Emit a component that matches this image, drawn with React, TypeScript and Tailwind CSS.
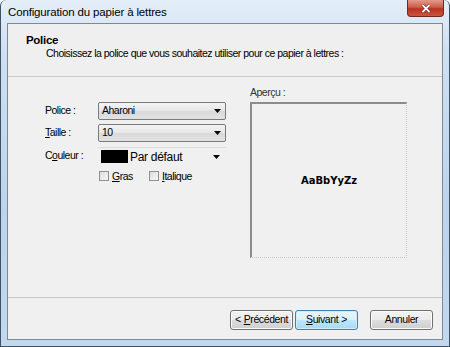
import React from "react";

const font = { fontFamily: '"Liberation Sans", Arial, sans-serif' };

function Arrow() {
  return (
    <svg width="7" height="4" viewBox="0 0 7 4" className="block">
      <path d="M0 0 H7 L3.5 4 Z" fill="#000" />
    </svg>
  );
}

function Select({ value }: { value: string }) {
  return (
    <div className="flex items-center justify-between h-[18px] w-[128px] rounded-[2px] border border-[#7a7a7a] bg-[linear-gradient(#f4f4f4,#e6e6e6_50%,#d9d9d9_51%,#e2e2e2)] pl-[3px] pr-[4px] text-[10.5px] tracking-[-0.5px] text-black">
      <span>{value}</span>
      <Arrow />
    </div>
  );
}

function Check({ children }: { children: React.ReactNode }) {
  return (
    <div className="flex items-center gap-[3px] w-[50px]">
      <div className="w-[10px] h-[10px] border border-[#8f8f8f] bg-[linear-gradient(135deg,#dcdcdc,#f7f7f7)]" />
      <span className="text-[10.5px] tracking-[-0.5px] leading-none">{children}</span>
    </div>
  );
}

function Btn({ children, def }: { children: React.ReactNode; def?: boolean }) {
  return (
    <div
      className={
        "flex items-center justify-center w-[63px] h-[20px] rounded-[3px] text-[10.5px] tracking-[-0.4px] text-black " +
        (def
          ? "border border-[#3c7fb1] bg-[linear-gradient(#eaf6fd,#d9f0fc_50%,#bee6fd_51%,#a7d9f5)] shadow-[inset_0_0_0_1px_#d0ecfa]"
          : "border border-[#707070] bg-[linear-gradient(#f2f2f2,#ebebeb_50%,#dddddd_51%,#cfcfcf)] shadow-[inset_0_0_0_1px_#fcfcfc]")
      }
    >
      {children}
    </div>
  );
}

export default function App() {
  return (
    <div
      style={font}
      className="w-[450px] h-[347px] flex flex-col overflow-hidden bg-[linear-gradient(180deg,#e4eef8,#cfe0f2_15%,#bcd4ec_60%,#c2d8ee)] border-x border-b border-[#3d5266] rounded-t-[6px] text-black"
    >
      {/* title bar */}
      <div className="h-[23px] flex justify-between items-start shrink-0">
        <div className="pl-[7px] pt-[5px] text-[11.5px] leading-[14px] tracking-[-0.15px] text-black">
          Configuration du papier à lettres
        </div>
        <div className="mr-[5px] w-[37px] h-[17px] rounded-b-[4px] border border-t-0 border-[#6e2a20] bg-[linear-gradient(#e49a8c,#cc5c4a_45%,#b8331f_55%,#c9563f)] flex items-center justify-center">
          <svg width="10" height="9" viewBox="0 0 10 9">
            <path d="M1.5 1 L8.5 8 M8.5 1 L1.5 8" stroke="#5a1a10" strokeWidth="3" />
            <path d="M1.5 1 L8.5 8 M8.5 1 L1.5 8" stroke="#fff" strokeWidth="1.8" />
          </svg>
        </div>
      </div>

      {/* client */}
      <div className="mx-[6px] h-[317px] shrink-0 border border-[#7d8a96] bg-[#f0f0f0] flex flex-col">
        {/* header */}
        <div className="h-[53px] shrink-0 border-b border-[#c9c9c9] pl-[18px] pt-[9px] bg-[#efefef]">
          <div className="text-[11.5px] font-bold leading-[14px] tracking-[-0.3px]">Police</div>
          <div className="pl-[20px] text-[10.5px] leading-[12px] tracking-[-0.5px]">
            Choisissez la police que vous souhaitez utiliser pour ce papier à lettres :
          </div>
        </div>

        {/* body */}
        <div className="flex flex-1 pl-[37px]">
          <div className="flex flex-col mt-[25px]">
            <div className="flex items-center h-[18px]">
              <span className="w-[53px] text-[10.5px] tracking-[-0.5px]">Police :</span>
              <Select value="Aharoni" />
            </div>
            <div className="flex items-center h-[18px] mt-[4px]">
              <span className="w-[53px] text-[10.5px] tracking-[-0.5px]">
                <u>T</u>aille :
              </span>
              <Select value="10" />
            </div>
            <div className="flex items-center h-[18px] mt-[5px]">
              <span className="w-[53px] text-[10.5px] tracking-[-0.5px]">
                C<u>o</u>uleur :
              </span>
              <div className="flex items-center justify-between w-[128px] h-[18px] border-t border-[#dcdcdc] pl-[3px] pr-[6px]">
                <div className="flex items-center gap-[2px]">
                  <div className="w-[27px] h-[13px] bg-black" />
                  <span className="text-[12px] tracking-[-0.3px]">Par défaut</span>
                </div>
                <Arrow />
              </div>
            </div>
            <div className="flex items-center mt-[6px] ml-[54px]">
              <Check>
                <u>G</u>ras
              </Check>
              <Check>
                <u>I</u>talique
              </Check>
            </div>
          </div>

          <div className="flex flex-col ml-[24px] mt-[9px]">
            <div className="text-[10.5px] leading-[13px] tracking-[-0.5px] text-[#333]">Aperçu :</div>
            <div className="mt-[3px] w-[157px] h-[156px] border-l-2 border-t-2 border-r border-b border-l-[#8c8c8c] border-t-[#8c8c8c] border-r-[#c8c8c8] border-b-[#c8c8c8] [border-right-style:dotted] [border-bottom-style:dotted] flex items-center justify-center">
              <span
                className="text-[10px] font-bold"
                style={{ fontFamily: '"DejaVu Sans", sans-serif' }}
              >
                AaBbYyZz
              </span>
            </div>
          </div>
        </div>

        {/* footer */}
        <div className="h-[42px] shrink-0 border-t border-[#c8c8c8] flex items-start justify-end pt-[12px] pr-[9px]">
          <Btn>
            <span className="mr-[3px]">&lt;</span>
            <u>P</u>récédent
          </Btn>
          <div className="ml-[2px]">
            <Btn def>
              <u>S</u>uivant
              <span className="ml-[3px]">&gt;</span>
            </Btn>
          </div>
          <div className="ml-[12px]">
            <Btn>Annuler</Btn>
          </div>
        </div>
      </div>
    </div>
  );
}
